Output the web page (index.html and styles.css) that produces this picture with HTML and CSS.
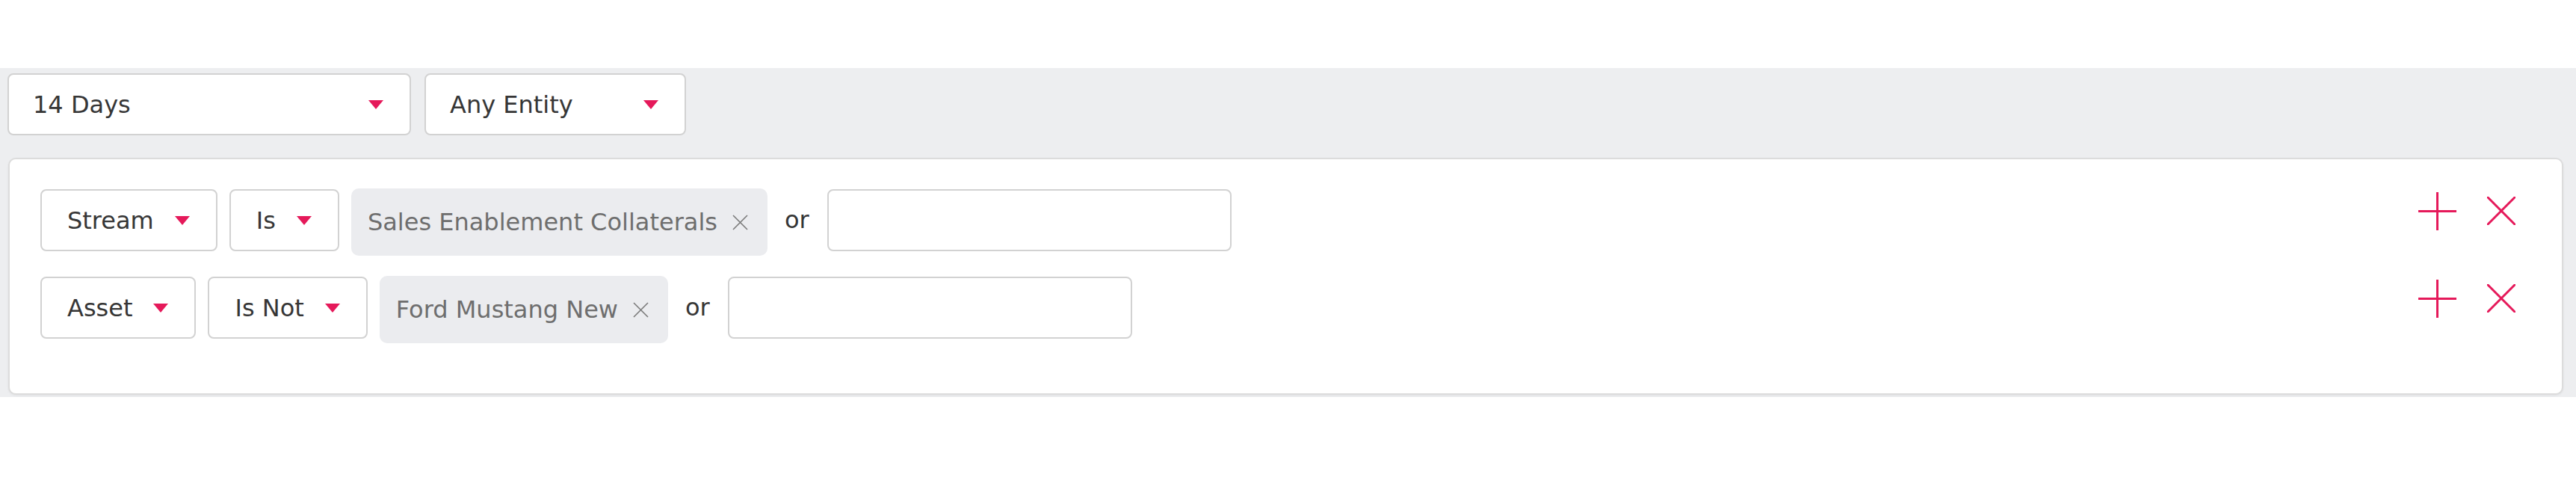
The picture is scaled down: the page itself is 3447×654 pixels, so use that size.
FILE: index.html
```html
<!DOCTYPE html>
<html lang="en">
<head>
    <meta charset="UTF-8">
    <meta name="viewport" content="width=device-width, initial-scale=1.0">
    <title>Filters</title>
    <link rel="stylesheet" href="styles.css">
</head>
<body>
    <div class="board">
        <!-- Periodo / entidade -->
        <div class="filters">
            <div class="select select-range"><span>14 Days</span><span class="caret"></span></div>
            <div class="select select-entity"><span>Any Entity</span><span class="caret"></span></div>
        </div>

        <!-- Regras -->
        <div class="rules">
            <div class="rule">
                <div class="select"><span>Stream</span><span class="caret"></span></div>
                <div class="select"><span>Is</span><span class="caret"></span></div>
                <div class="tag">
                    <span>Sales Enablement Collaterals</span>
                    <svg class="tag-remove" width="23" height="21" viewBox="0 0 23 21"><path d="M2 1 L21 20 M21 1 L2 20" /></svg>
                </div>
                <span class="or">or</span>
                <input class="value" type="text">
                <div class="actions">
                    <svg class="icon-add" width="51" height="51" viewBox="0 0 51 51"><path d="M25.5 0 V51 M0 25.5 H51" /></svg>
                    <svg class="icon-remove" width="38" height="38" viewBox="0 0 38 38"><path d="M1 1 L37 37 M37 1 L1 37" /></svg>
                </div>
            </div>
            <div class="rule">
                <div class="select"><span>Asset</span><span class="caret"></span></div>
                <div class="select"><span>Is Not</span><span class="caret"></span></div>
                <div class="tag">
                    <span>Ford Mustang New</span>
                    <svg class="tag-remove" width="23" height="21" viewBox="0 0 23 21"><path d="M2 1 L21 20 M21 1 L2 20" /></svg>
                </div>
                <span class="or">or</span>
                <input class="value" type="text">
                <div class="actions">
                    <svg class="icon-add" width="51" height="51" viewBox="0 0 51 51"><path d="M25.5 0 V51 M0 25.5 H51" /></svg>
                    <svg class="icon-remove" width="38" height="38" viewBox="0 0 38 38"><path d="M1 1 L37 37 M37 1 L1 37" /></svg>
                </div>
            </div>
        </div>
    </div>
</body>
</html>
```

FILE: styles.css
```css
/* CSS */
body {
    font-family: "DejaVu Sans", sans-serif;
    font-size: 32px;
    color: #363636;
    background-color: #ffffff;
    margin: 0;
    padding: 91px 0 0 0;
}

.board {
    background-color: #edeef0;
    padding: 7px 17px 3px 10px;
}

.filters {
    display: flex;
    gap: 18px;
}

.select {
    box-sizing: border-box;
    height: 83px;
    display: flex;
    align-items: center;
    gap: 28px;
    padding: 0 35px 0 34px;
    background: #ffffff;
    border: 2px solid #d2d2d2;
    border-radius: 8px;
    white-space: nowrap;
}

.select-range {
    width: 540px;
    justify-content: space-between;
    padding-left: 32px;
}

.select-entity {
    width: 350px;
    justify-content: space-between;
    padding-left: 32px;
}

.caret {
    width: 0;
    height: 0;
    border-left: 10px solid transparent;
    border-right: 10px solid transparent;
    border-top: 12px solid #e5195a;
}

.rules {
    margin: 30px 0 0 1px;
    background: #ffffff;
    border: 2px solid #dcdcdc;
    border-radius: 10px;
    box-shadow: 0 1px 3px rgba(0, 0, 0, 0.06);
    padding: 39px 62px 67px 41px;
}

.rule {
    display: flex;
    align-items: flex-start;
    gap: 16px;
}

.rule + .rule {
    margin-top: 27px;
}

.rule .select {
    margin-top: 1px;
}

.tag {
    box-sizing: border-box;
    height: 90px;
    display: flex;
    align-items: center;
    gap: 19px;
    padding: 0 25px 0 22px;
    background-color: #ebecef;
    border-radius: 10px;
    color: #6e6e6e;
    white-space: nowrap;
}

.tag-remove path {
    stroke: #7a7a7a;
    stroke-width: 1.6;
    fill: none;
}

.or {
    line-height: 85px;
    margin: 0 8px 0 7px;
}

.value {
    box-sizing: border-box;
    width: 541px;
    height: 83px;
    margin-top: 1px;
    border: 2px solid #d2d2d2;
    border-radius: 8px;
    background: #ffffff;
    font-family: inherit;
    font-size: 32px;
}

.actions {
    margin-left: auto;
    height: 60px;
    display: flex;
    align-items: center;
    gap: 41px;
}

.actions path {
    stroke: #e5195a;
    stroke-width: 3;
    stroke-linecap: round;
    fill: none;
}
```
